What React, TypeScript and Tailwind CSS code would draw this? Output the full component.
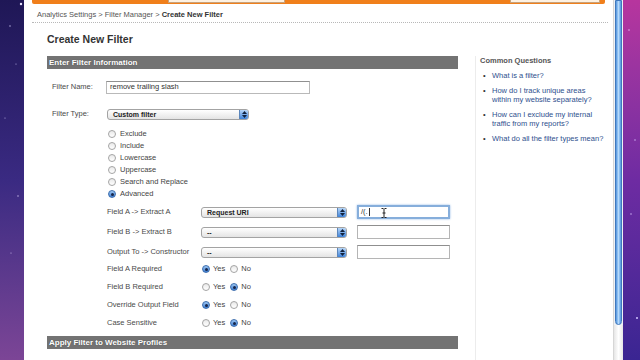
import { ReactNode } from 'react';

function Radio({ checked }: { checked?: boolean }) {
  return checked ? (
    <span className="flex items-center justify-center w-[8px] h-[8px] rounded-full border border-[#3d6eae] bg-gradient-to-b from-[#9cc6f2] to-[#3f7fd3] shrink-0">
      <span className="w-[3px] h-[3px] rounded-full bg-[#16264a]" />
    </span>
  ) : (
    <span className="block w-[8px] h-[8px] rounded-full border border-[#a4a4a4] bg-gradient-to-b from-[#e9e9e9] to-white shrink-0" />
  );
}

function Select({ value, width }: { value: string; width: string }) {
  return (
    <div
      className={`${width} h-[11px] flex items-center rounded-[3px] border border-[#a3a3a3] bg-gradient-to-b from-white to-[#e4e4e4] overflow-hidden`}
    >
      <span className="flex-1 pl-[5px] text-[7px] font-bold text-[#222] leading-none">{value}</span>
      <span className="flex flex-col items-center justify-center gap-[1px] w-[9px] h-full bg-gradient-to-b from-[#b7d6f7] to-[#3c82d9] border-l border-[#5b86bb]">
        <svg width="5" height="3" viewBox="0 0 5 3">
          <path d="M0 3 L2.5 0 L5 3 Z" fill="#10213d" />
        </svg>
        <svg width="5" height="3" viewBox="0 0 5 3">
          <path d="M0 0 L2.5 3 L5 0 Z" fill="#10213d" />
        </svg>
      </span>
    </div>
  );
}

function TextBox({ children, focused }: { children?: ReactNode; focused?: boolean }) {
  return focused ? (
    <div className="relative w-[93px] h-[14px] flex items-center border-2 border-[#86aedb] shadow-[0_0_2px_#8fb7e6] bg-white pl-[2px]">
      <span className="text-[7.5px] text-[#333] leading-none">/(.</span>
      <span className="w-px h-[8px] bg-[#333] ml-[1px]" />
      <svg className="absolute left-[22px] top-[1px]" width="6" height="10" viewBox="0 0 6 10">
        <path d="M0.5 0.5 H2.5 M3.5 0.5 H5.5 M3 1 V9 M0.5 9.5 H2.5 M3.5 9.5 H5.5 M1.5 5 H4.5" stroke="#222" strokeWidth="1" fill="none" />
      </svg>
      {children}
    </div>
  ) : (
    <div className="w-[93px] h-[14px] border border-[#b5b5b5] border-t-[#8f8f8f] bg-white" />
  );
}

function YesNo({ yes }: { yes: boolean }) {
  return (
    <div className="flex items-center text-[7.5px] text-[#444] leading-none">
      <Radio checked={yes} />
      <span className="ml-[3px]">Yes</span>
      <span className="ml-[5px] flex items-center">
        <Radio checked={!yes} />
      </span>
      <span className="ml-[3px]">No</span>
    </div>
  );
}

function SectionBar({ title }: { title: string }) {
  return (
    <div className="h-[13px] flex items-center bg-[#737373] pl-[2px] text-[8px] font-bold text-white leading-none [text-shadow:0_0_1px_#444]">
      {title}
    </div>
  );
}

const filterTypes = ['Exclude', 'Include', 'Lowercase', 'Uppercase', 'Search and Replace', 'Advanced'];

const extractRows = [
  { label: 'Field A -> Extract A', value: 'Request URI', focused: true },
  { label: 'Field B -> Extract B', value: '--', focused: false },
  { label: 'Output To -> Constructor', value: '--', focused: false },
];

const requiredRows = [
  { label: 'Field A Required', yes: true },
  { label: 'Field B Required', yes: false },
  { label: 'Override Output Field', yes: true },
  { label: 'Case Sensitive', yes: false },
];

const questions = [
  'What is a filter?',
  'How do I track unique areas within my website separately?',
  'How can I exclude my internal traffic from my reports?',
  'What do all the filter types mean?',
];

export default function App() {
  return (
    <div className="w-[640px] h-[360px] flex overflow-hidden font-['Liberation_Sans',Arial,sans-serif]">
      {/* desktop, left */}
      <div className="w-[24px] h-full bg-gradient-to-b from-[#1f1756] via-[#3a2a82] to-[#7c4596]">
        <svg width="24" height="360" viewBox="0 0 24 360">
          <circle cx="21" cy="4" r="1.2" fill="#e8e4ff" />
          <circle cx="10" cy="26" r="0.7" fill="#c9c2f0" />
          <circle cx="16" cy="64" r="0.6" fill="#b9b0e6" />
          <circle cx="5" cy="118" r="0.6" fill="#b9b0e6" />
          <circle cx="18" cy="196" r="0.7" fill="#d0c6f0" />
          <circle cx="11" cy="253" r="0.6" fill="#c6b4e6" />
        </svg>
      </div>

      {/* browser page */}
      <div className="w-[589px] h-full bg-white flex flex-col text-[#4a4a4a]">
        <div className="mx-[8px] h-[4px] bg-[#f07f1b] rounded-b-[2px] flex">
          <div className="ml-[136px] w-[117px] h-[3px] bg-[#fdf1e2] border-x border-b border-[#c9a27a]" />
          <div className="ml-[225px] w-[90px] h-[3px] bg-[#fdf1e2] border-x border-b border-[#c9a27a]" />
        </div>

        <div className="ml-[8px] mr-[5px] pl-[5px] pt-[6px] pb-[2px] border-b border-dotted border-[#b8b8b8] text-[7.5px] leading-[10px] text-[#555]">
          Analytics Settings &gt; Filter Manager &gt; <span className="font-bold text-[#333]">Create New Filter</span>
        </div>

        <h1 className="mt-[10px] pl-[23px] text-[10.5px] leading-[13px] font-bold text-[#333]">Create New Filter</h1>

        <div className="flex flex-1 mt-[10px] pl-[23px]">
          {/* form */}
          <div className="w-[411px] flex flex-col">
            <SectionBar title="Enter Filter Information" />

            <div className="flex items-center mt-[12px] h-[12px]">
              <span className="w-[59px] pl-[5px] text-[7.5px] leading-none">Filter Name:</span>
              <div className="w-[204px] h-[13px] flex items-center border border-[#b9b9b9] border-t-[#909090] pl-[3px] text-[7.5px] text-[#333] leading-none">
                remove trailing slash
              </div>
            </div>

            <div className="flex mt-[16px]">
              <span className="w-[59px] pl-[5px] text-[7.5px] leading-none pt-[1px]">Filter Type:</span>
              <div className="flex flex-col pl-[1px]">
                <Select value="Custom filter" width="w-[142px]" />
                <div className="flex flex-col mt-[8px] pl-[1px]">
                  {filterTypes.map((t) => (
                    <div key={t} className="h-[12px] flex items-center gap-[4px] text-[7.5px] leading-none text-[#444]">
                      <Radio checked={t === 'Advanced'} />
                      {t}
                    </div>
                  ))}
                </div>
              </div>
            </div>

            <div className="flex flex-col ml-[60px] mt-[5px] gap-[6px]">
              {extractRows.map((r) => (
                <div key={r.label} className="h-[14px] flex items-center text-[7.5px] leading-none text-[#4a4a4a]">
                  <span className="w-[94px]">{r.label}</span>
                  <Select value={r.value} width="w-[146px]" />
                  <span className="ml-[10px]">
                    <TextBox focused={r.focused} />
                  </span>
                </div>
              ))}
            </div>

            <div className="flex flex-col ml-[60px] mt-[4px] gap-[6px]">
              {requiredRows.map((r) => (
                <div key={r.label} className="h-[12px] flex items-center text-[7.5px] leading-none text-[#4a4a4a]">
                  <span className="w-[95px]">{r.label}</span>
                  <YesNo yes={r.yes} />
                </div>
              ))}
            </div>

            <div className="mt-[7px]">
              <SectionBar title="Apply Filter to Website Profiles" />
            </div>
          </div>

          {/* sidebar */}
          <div className="ml-[17px] flex-1 border-l border-[#ececec] pl-[4px]">
            <div className="text-[7.5px] leading-[10px] font-bold text-[#555]">Common Questions</div>
            <ul className="mt-[5px] flex flex-col gap-[6px]">
              {questions.map((q) => (
                <li key={q} className="flex text-[7.5px] leading-[9px]">
                  <span className="w-[12px] pl-[3px] text-[#333]">•</span>
                  <a className="w-[112px] text-[#2e4f8e]">{q}</a>
                </li>
              ))}
            </ul>
          </div>
        </div>
      </div>

      {/* scrollbar */}
      <div className="w-[10px] h-full flex flex-col border-l border-[#d6d6d6] bg-[#eef1f5]">
        <div className="h-[325px] mx-[1px] rounded-b-[4px] bg-gradient-to-r from-[#4f93dc] via-[#b5dafc] to-[#4f93dc] border border-[#3f78bd]" />
        <div className="flex-1 bg-gradient-to-r from-[#e6e6e6] via-white to-[#e6e6e6]" />
      </div>

      {/* desktop, right */}
      <div className="flex-1 h-full bg-gradient-to-b from-[#b7359e] via-[#6e2ba2] to-[#3a2592]">
        <svg width="17" height="360" viewBox="0 0 17 360">
          <circle cx="6" cy="30" r="0.7" fill="#f0c8ff" />
          <circle cx="12" cy="140" r="0.7" fill="#d8c0ff" />
          <circle cx="8" cy="214" r="0.7" fill="#d8c0ff" />
          <circle cx="14" cy="318" r="1" fill="#d0c4ff" />
        </svg>
      </div>
    </div>
  );
}
